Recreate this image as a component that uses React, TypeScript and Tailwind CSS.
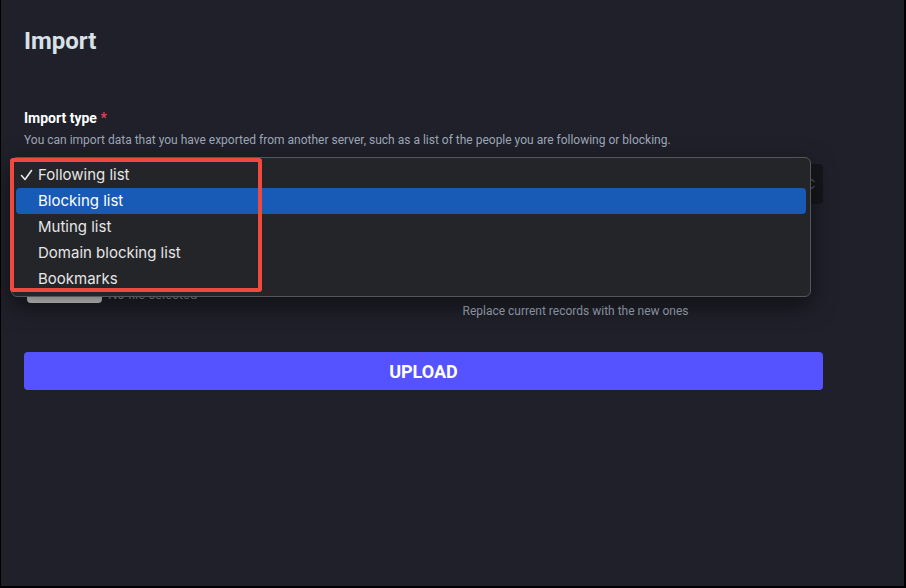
const options = ["Following list", "Blocking list", "Muting list", "Domain blocking list", "Bookmarks"];

function Check() {
  return (
    <svg width="13" height="12" viewBox="0 0 13 12" fill="none" className="absolute left-[4px] top-[7px]">
      <path d="M1.5 6.5 L5 10.5 L11.5 1.5" stroke="#e8e8e8" strokeWidth="1.6" strokeLinecap="round" strokeLinejoin="round" />
    </svg>
  );
}

export default function App() {
  return (
    <div className="relative h-[588px] w-[906px] overflow-hidden border-b-2 border-l border-r-2 border-black bg-[#1f2029] font-['Roboto',sans-serif]">
      <div className="w-[846px] pl-[23px] pr-6 pt-[25px]">
        <h1 className="text-[24px] font-bold leading-[32px] text-[#d9e1e8]">Import</h1>

        <div className="mt-[51px]">
          <label className="block text-[14px] font-bold leading-[20px] text-white">
            Import type <span className="text-[#df405a]">*</span>
          </label>
          <p className="mt-[3px] text-[12px] leading-[18px] text-[#9ea7b8]">
            You can import data that you have exported from another server, such as a list of the people you are following or blocking.
          </p>

          <div className="relative mt-[15px] h-[40px] w-full rounded-[4px] bg-[#16171b]">
            <svg width="8" height="14" viewBox="0 0 8 14" fill="none" className="absolute right-[7px] top-[13px]">
              <path d="M1.5 5 L4 2.5 L6.5 5" stroke="#4b4d55" strokeWidth="1.4" />
              <path d="M1.5 9 L4 11.5 L6.5 9" stroke="#4b4d55" strokeWidth="1.4" />
            </svg>

            {/* open native menu */}
            <div className="absolute left-[-13px] top-[-7px] z-10 h-[140px] w-[800px] rounded-[6px] border border-[#55565b] bg-[#242529] px-[4px] py-[4px] shadow-[0_8px_24px_rgba(0,0,0,0.5)] font-['Inter',sans-serif]">
              {options.map((o, i) => (
                <div
                  key={o}
                  className={
                    i === 1
                      ? "relative flex h-[26px] items-center rounded-[4px] bg-[#175bb6] pl-[22px] text-[15px] text-white"
                      : "relative flex h-[26px] items-center rounded-[4px] pl-[22px] text-[15px] text-[#e6e6e6]"
                  }
                >
                  {i === 0 && <Check />}
                  {o}
                </div>
              ))}
            </div>

            {/* annotation */}
            <div className="absolute left-[-14px] top-[-6px] z-20 h-[134px] w-[252px] rounded-[3px] border-4 border-[#f04a3f]" />
          </div>
        </div>

        <div className="mt-[78px] grid grid-cols-2 gap-x-[30px]">
          <div className="flex h-[21px] items-end gap-[6px] pl-[3px]">
            <div className="h-[20px] w-[75px] rounded-[4px] bg-[#d9d9d9]" />
            <span className="text-[13px] leading-[16px] text-[#8f939b]">No file selected</span>
          </div>
          <div className="pl-6 pt-[21px]">
            <p className="text-[12px] leading-[16px] text-[#9ea7b8]">Replace current records with the new ones</p>
          </div>
        </div>

        <button className="mt-[33px] flex h-[38px] w-full items-center justify-center rounded-[4px] bg-[#5553ff] text-[18px] font-bold text-white">
          UPLOAD
        </button>
      </div>
    </div>
  );
}
